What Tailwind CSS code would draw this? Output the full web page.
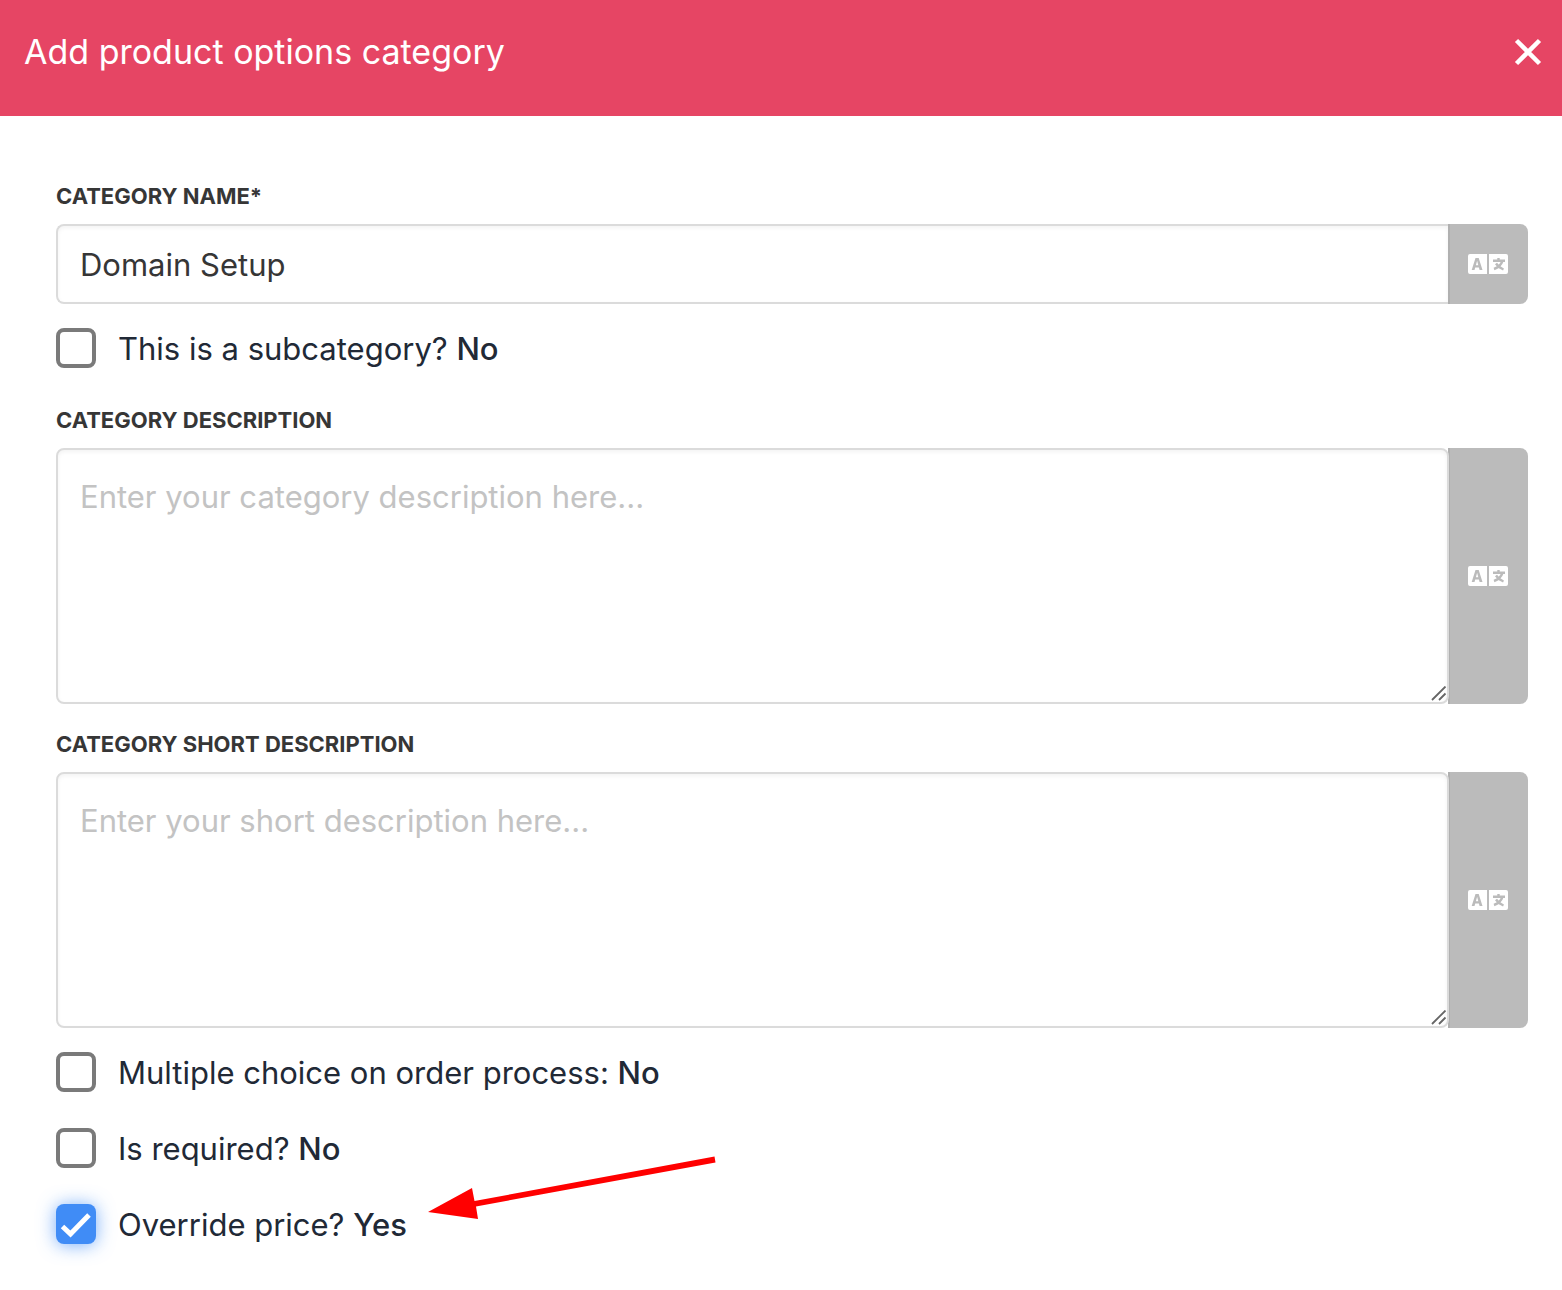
<!DOCTYPE html>
<html lang="en">
<head>
<meta charset="utf-8">
<meta name="viewport" content="width=device-width, initial-scale=1">
<title>Add product options category</title>
<script src="https://cdn.jsdelivr.net/npm/@tailwindcss/browser@4"></script>
</head>
<body class="min-h-screen bg-white font-['Inter',sans-serif] text-[#363636]">
<svg class="hidden" aria-hidden="true">
  <symbol id="translate" viewBox="0 0 40 20">
    <path fill="#fff" d="M2 0H19V20H2Q0 20 0 18V2Q0 0 2 0ZM21 0H38Q40 0 40 2V18Q40 20 38 20H21Z"/>
    <path fill="#bbb" fill-rule="evenodd" d="M7.500 4H10.700L14.500 16H11.600L10.900 13.500H7.200L6.500 16H3.700ZM9.100 6.800L7.900 11.200H10.300Z"/>
    <path fill="none" stroke="#bbb" stroke-width="2.400" d="M25 6.800H37M30.500 4V6.800M34.400 7Q32.500 12.700 26 15M28 9.500Q30.500 13.500 35.500 15.500"/>
  </symbol>
  <symbol id="grip" viewBox="0 0 16 16">
    <path fill="none" stroke="#666" stroke-width="1.800" d="M1 14L14.500 .500M8 14L14.500 7.500"/>
  </symbol>
</svg>

<header class="flex h-[116px] items-start justify-between bg-[#e64564] pt-7 pr-5 pl-6 text-white">
  <h1 class="text-[34px] leading-12">Add product options category</h1>
  <button type="button" aria-label="Close" class="mt-2.5 flex h-7 w-7 items-center justify-center">
    <svg class="h-7 w-7" viewBox="0 0 28 28"><path d="M2.500 2.500L25.500 25.500M25.500 2.500L2.500 25.500" fill="none" stroke="#fff" stroke-width="4.500"/></svg>
  </button>
</header>

<form class="pt-16 pr-[34px] pb-11 pl-14">
  <label for="name" class="block text-[22px] leading-8 font-bold uppercase">Category name*</label>
  <div class="mt-3 flex h-20">
    <input id="name" type="text" value="Domain Setup" class="min-w-0 flex-1 rounded-l-lg border-2 border-r-0 border-[#dbdbdb] bg-white px-[22px] pt-0.5 text-[31px] shadow-[inset_0_2px_4px_rgba(10,10,10,0.05)] outline-none">
    <button type="button" aria-label="Translate name" class="flex w-20 items-center justify-center rounded-r-lg bg-[#bbb] shadow-[inset_2px_0_0_#b0b0b0]"><svg class="h-5 w-10"><use href="#translate"/></svg></button>
  </div>

  <label class="mt-6 flex h-10 w-fit items-center gap-[22px] text-[31px] text-[#212936]">
    <input type="checkbox" class="h-10 w-10 shrink-0 appearance-none rounded-lg border-4 border-[#7a7a7a] bg-white">
    <span class="pt-0.5">This is a subcategory? <strong class="font-medium">No</strong></span>
  </label>

  <label for="description" class="mt-9 block text-[22px] leading-8 font-bold uppercase">Category description</label>
  <div class="mt-3 flex h-64">
    <div class="relative -mr-px min-w-0 flex-1">
      <textarea id="description" placeholder="Enter your category description here..." class="block h-full w-full resize-none rounded-lg border-2 border-[#dbdbdb] bg-white px-[22px] py-6 text-[31px] leading-[46px] shadow-[inset_0_2px_4px_rgba(10,10,10,0.05)] outline-none placeholder:text-[#c3c3c3]"></textarea>
      <svg class="pointer-events-none absolute right-0.5 bottom-0.5 h-4 w-4"><use href="#grip"/></svg>
    </div>
    <button type="button" aria-label="Translate description" class="flex w-20 items-center justify-center rounded-r-lg bg-[#bbb] shadow-[inset_2px_0_0_#b0b0b0]"><svg class="h-5 w-10"><use href="#translate"/></svg></button>
  </div>

  <label for="short" class="mt-6 block text-[22px] leading-8 font-bold uppercase">Category short description</label>
  <div class="mt-3 flex h-64">
    <div class="relative -mr-px min-w-0 flex-1">
      <textarea id="short" placeholder="Enter your short description here..." class="block h-full w-full resize-none rounded-lg border-2 border-[#dbdbdb] bg-white px-[22px] py-6 text-[31px] leading-[46px] shadow-[inset_0_2px_4px_rgba(10,10,10,0.05)] outline-none placeholder:text-[#c3c3c3]"></textarea>
      <svg class="pointer-events-none absolute right-0.5 bottom-0.5 h-4 w-4"><use href="#grip"/></svg>
    </div>
    <button type="button" aria-label="Translate short description" class="flex w-20 items-center justify-center rounded-r-lg bg-[#bbb] shadow-[inset_2px_0_0_#b0b0b0]"><svg class="h-5 w-10"><use href="#translate"/></svg></button>
  </div>

  <div class="mt-6 flex flex-col gap-9 text-[31px] text-[#212936]">
    <label class="flex h-10 w-fit items-center gap-[22px]">
      <input type="checkbox" class="h-10 w-10 shrink-0 appearance-none rounded-lg border-4 border-[#7a7a7a] bg-white">
      <span class="pt-0.5">Multiple choice on order process: <strong class="font-medium">No</strong></span>
    </label>
    <label class="flex h-10 w-fit items-center gap-[22px]">
      <input type="checkbox" class="h-10 w-10 shrink-0 appearance-none rounded-lg border-4 border-[#7a7a7a] bg-white">
      <span class="pt-0.5">Is required? <strong class="font-medium">No</strong></span>
    </label>
    <div class="relative">
      <label class="flex h-10 w-fit items-center gap-[22px]">
        <span class="relative h-10 w-10 shrink-0">
          <input type="checkbox" checked class="block h-10 w-10 appearance-none rounded-lg bg-[#408cf6] shadow-[0_1px_18px_rgba(64,140,246,0.7)]">
          <svg class="pointer-events-none absolute inset-0 h-10 w-10" viewBox="0 0 40 40"><path d="M6.500 22.500L14.500 30L33 11" fill="none" stroke="#fff" stroke-width="5"/></svg>
        </span>
        <span class="pt-0.5">Override price? <strong class="font-medium">Yes</strong></span>
      </label>
      <!-- Callout arrow pointing at the price option -->
      <svg class="pointer-events-none absolute -top-12 left-[372px] h-16 w-72" viewBox="0 0 288 64" aria-hidden="true">
        <path d="M286.500 .500L287.500 6.500L48 50.500L50 63L0 56L44 32L46.500 45Z" fill="#f00"/>
      </svg>
    </div>
  </div>
</form>
</body>
</html>
